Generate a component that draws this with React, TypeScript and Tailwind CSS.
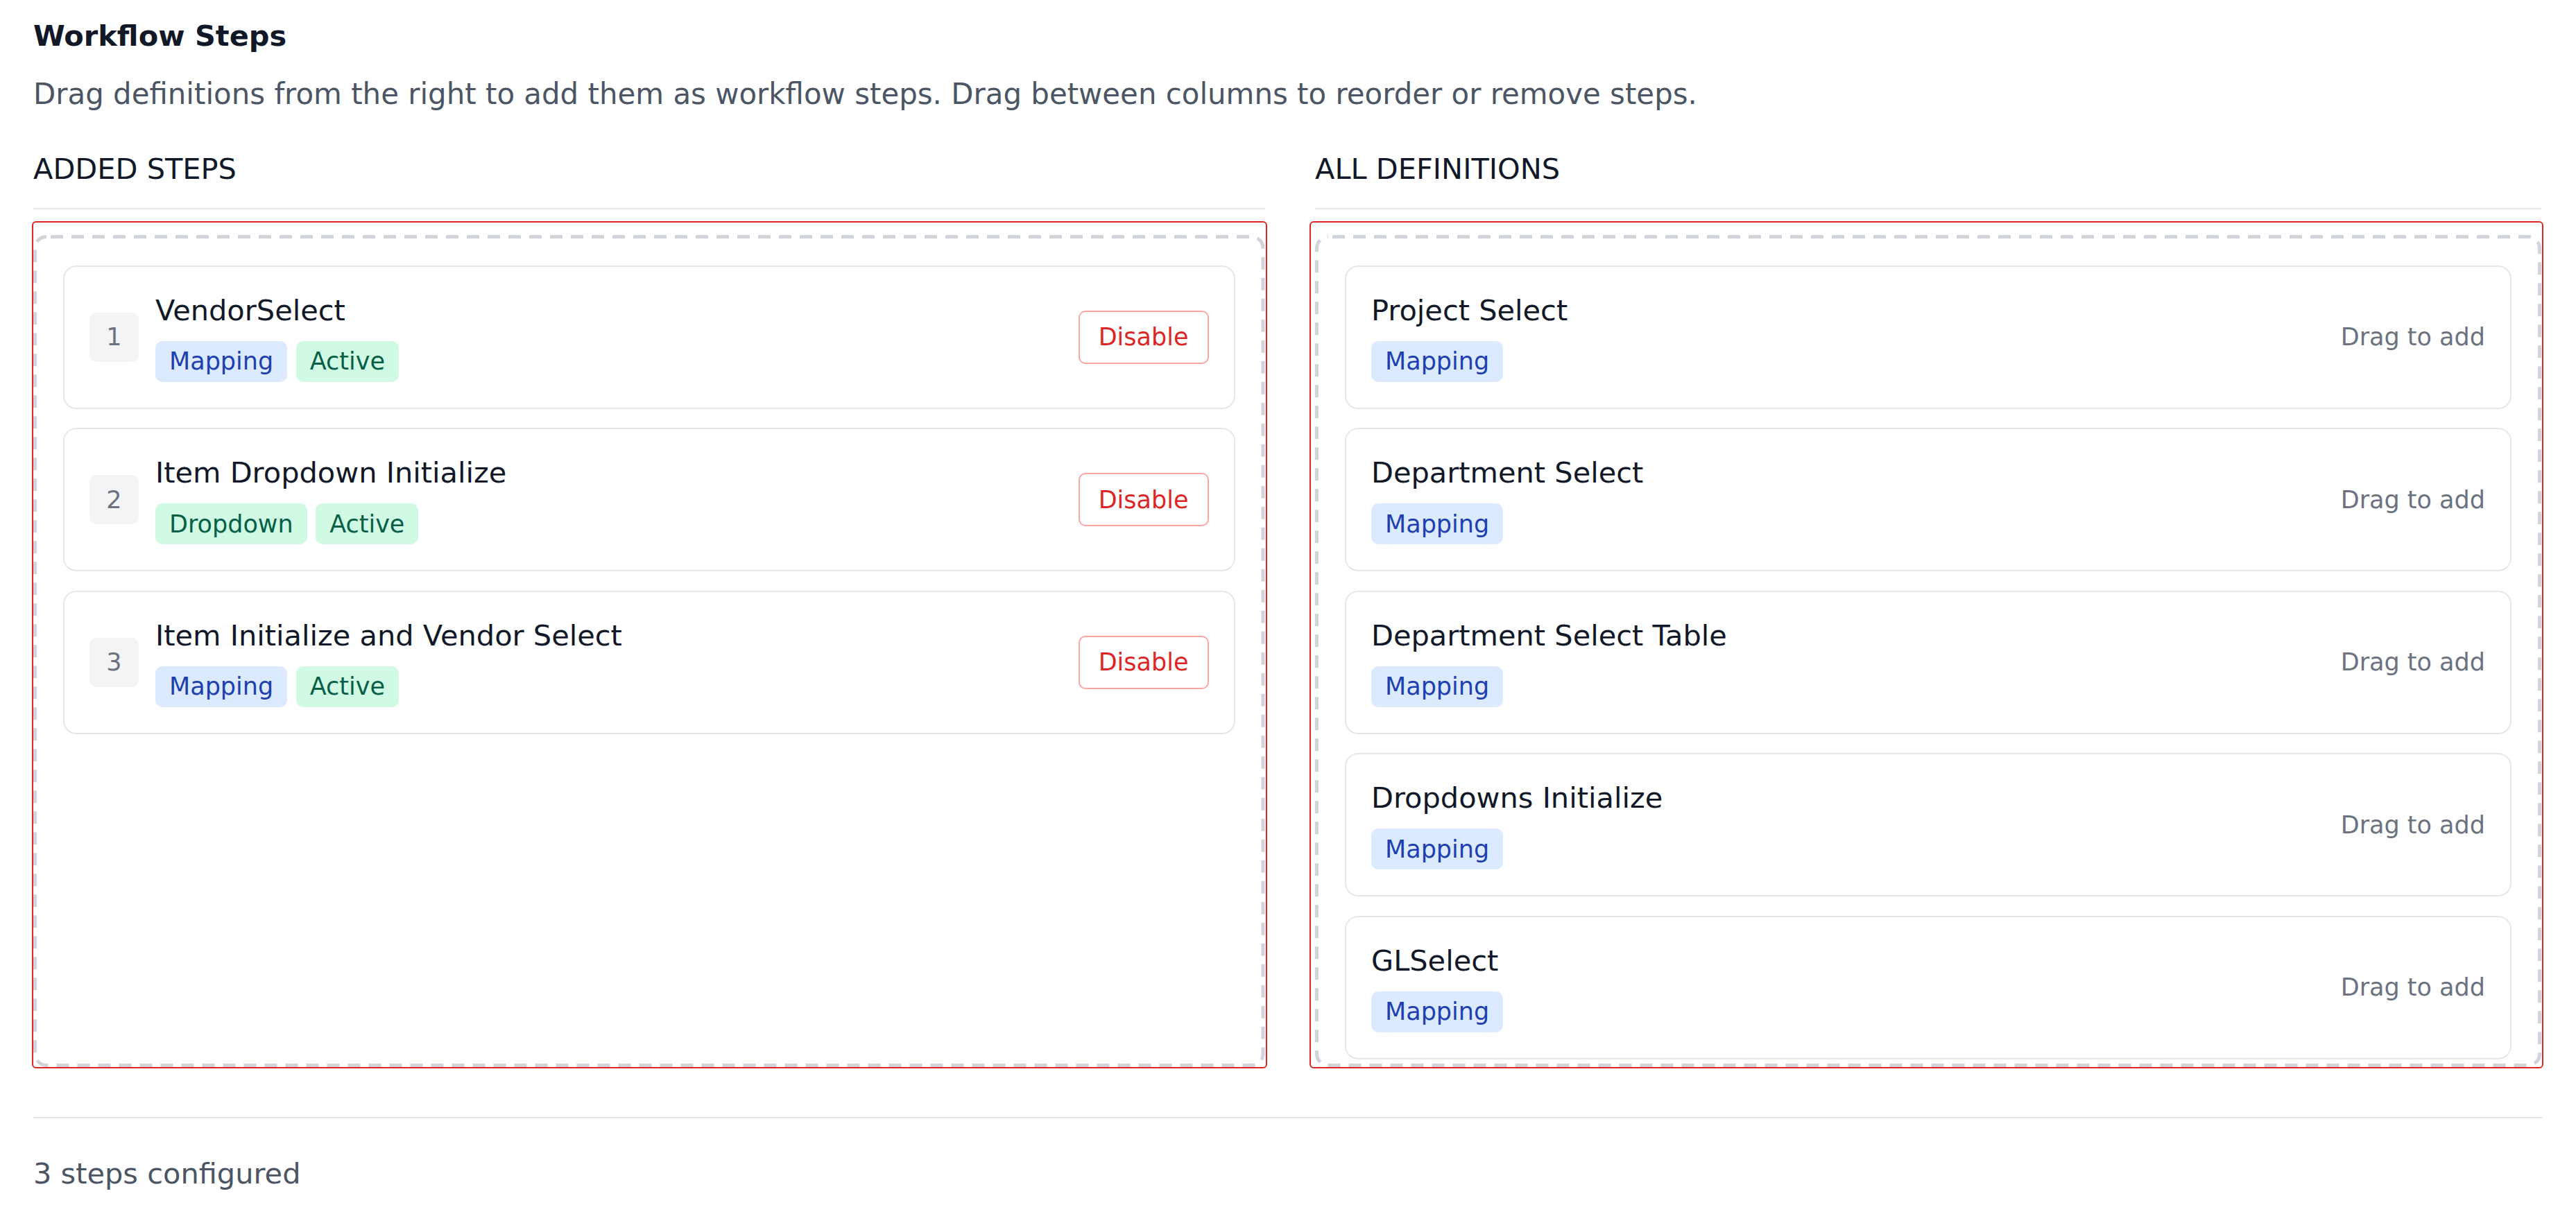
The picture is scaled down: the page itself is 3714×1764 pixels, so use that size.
import React from "react";

type Badge = { label: string; tone: "blue" | "green" };

const added: { name: string; badges: Badge[] }[] = [
  { name: "VendorSelect", badges: [{ label: "Mapping", tone: "blue" }, { label: "Active", tone: "green" }] },
  { name: "Item Dropdown Initialize", badges: [{ label: "Dropdown", tone: "green" }, { label: "Active", tone: "green" }] },
  { name: "Item Initialize and Vendor Select", badges: [{ label: "Mapping", tone: "blue" }, { label: "Active", tone: "green" }] },
];

const defs = ["Project Select", "Department Select", "Department Select Table", "Dropdowns Initialize", "GLSelect"];

function Pill({ b }: { b: Badge }) {
  return (
    <span
      className={
        b.tone === "blue"
          ? "inline-flex h-[59px] items-center rounded-[10px] bg-[#dbeafe] px-[20px] text-[35px] leading-[50px] text-[#1e40af]"
          : "inline-flex h-[59px] items-center rounded-[10px] bg-[#d1fae5] px-[20px] text-[35px] leading-[50px] text-[#065f46]"
      }
    >
      {b.label}
    </span>
  );
}

function DashedOutline() {
  return (
    <svg className="pointer-events-none absolute -left-[5px] -top-[5px] h-[calc(100%+10px)] w-[calc(100%+10px)]" aria-hidden="true">
      <rect
        x="2.5"
        y="2.5"
        rx="16.5"
        ry="16.5"
        className="h-[calc(100%-5px)] w-[calc(100%-5px)]"
        fill="none"
        stroke="#d1d5db"
        strokeWidth="5"
        strokeDasharray="18 12"
        strokeDashoffset="-6"
      />
    </svg>
  );
}

export default function App() {
  return (
    <div className="min-h-screen bg-white px-[48px] pt-[26px] font-['DejaVu_Sans',sans-serif] text-[41.5px] leading-[52px]">
      <h1 className="font-bold text-[#111827]">Workflow Steps</h1>
      <p className="mt-[32px] text-[41.9px] text-[#4b5563]">
        Drag definitions from the right to add them as workflow steps. Drag between columns to reorder or remove steps.
      </p>

      <div className="mt-[56.4px] flex gap-[72.5px]">
        {/* Added steps */}
        <div className="w-[1775.5px] shrink-0">
          <div className="border-b-2 border-[#e5e7eb] pb-[30px] text-[#111827]">ADDED STEPS</div>
          <div className="-ml-[2px] -mr-[3px] mt-[16.3px] rounded-[6px] border-2 border-[#dc2626] pr-[1px] pt-[18.7px]">
            <div className="relative flex h-[1200px] flex-col gap-[27.5px] rounded-[19px] border-[5px] border-transparent px-[38px] pt-[38.5px]">
              <DashedOutline />
              {added.map((s, i) => (
                <div
                  key={s.name}
                  className="relative flex h-[207px] shrink-0 items-center rounded-[19px] border-2 border-[#e5e7eb] bg-white px-[36px]"
                >
                  <div className="mr-[24px] flex h-[71px] w-[71px] shrink-0 items-center justify-center rounded-[10px] bg-[#f3f4f6] text-[35px] text-[#6b7280]">
                    {i + 1}
                  </div>
                  <div className="min-w-0 flex-1">
                    <div className="text-[#111827]">{s.name}</div>
                    <div className="mt-[18px] flex gap-[12.5px]">
                      {s.badges.map((b, j) => (
                        <Pill key={j} b={b} />
                      ))}
                    </div>
                  </div>
                  <button className="flex h-[77px] items-center rounded-[10px] border-2 border-[#fca5a5] bg-white px-[27px] text-[35px] leading-[50px] text-[#dc2626]">
                    Disable
                  </button>
                </div>
              ))}
            </div>
          </div>
        </div>

        {/* All definitions */}
        <div className="w-[1768px] shrink-0">
          <div className="border-b-2 border-[#e5e7eb] pb-[30px] text-[#111827]">ALL DEFINITIONS</div>
          <div className="-ml-[8px] -mr-[3px] mt-[16.3px] rounded-[6px] border-2 border-[#dc2626] pl-[6px] pr-[1px] pt-[18.7px]">
            <div className="relative flex h-[1200px] flex-col gap-[27.5px] rounded-[19px] border-[5px] border-transparent px-[38px] pt-[38.5px]">
              <DashedOutline />
              {defs.map((d) => (
                <div
                  key={d}
                  className="relative flex h-[207px] shrink-0 items-center rounded-[19px] border-2 border-[#e5e7eb] bg-white px-[36px]"
                >
                  <div className="min-w-0 flex-1">
                    <div className="text-[#111827]">{d}</div>
                    <div className="mt-[18px] flex gap-[12.5px]">
                      <Pill b={{ label: "Mapping", tone: "blue" }} />
                    </div>
                  </div>
                  <span className="text-[35px] leading-[50px] text-[#6b7280]">Drag to add</span>
                </div>
              ))}
            </div>
          </div>
        </div>
      </div>

      <div className="mt-[70px] border-t-2 border-[#e5e7eb]" />
      <p className="mt-[53.7px] text-[#4b5563]">3 steps configured</p>
    </div>
  );
}
